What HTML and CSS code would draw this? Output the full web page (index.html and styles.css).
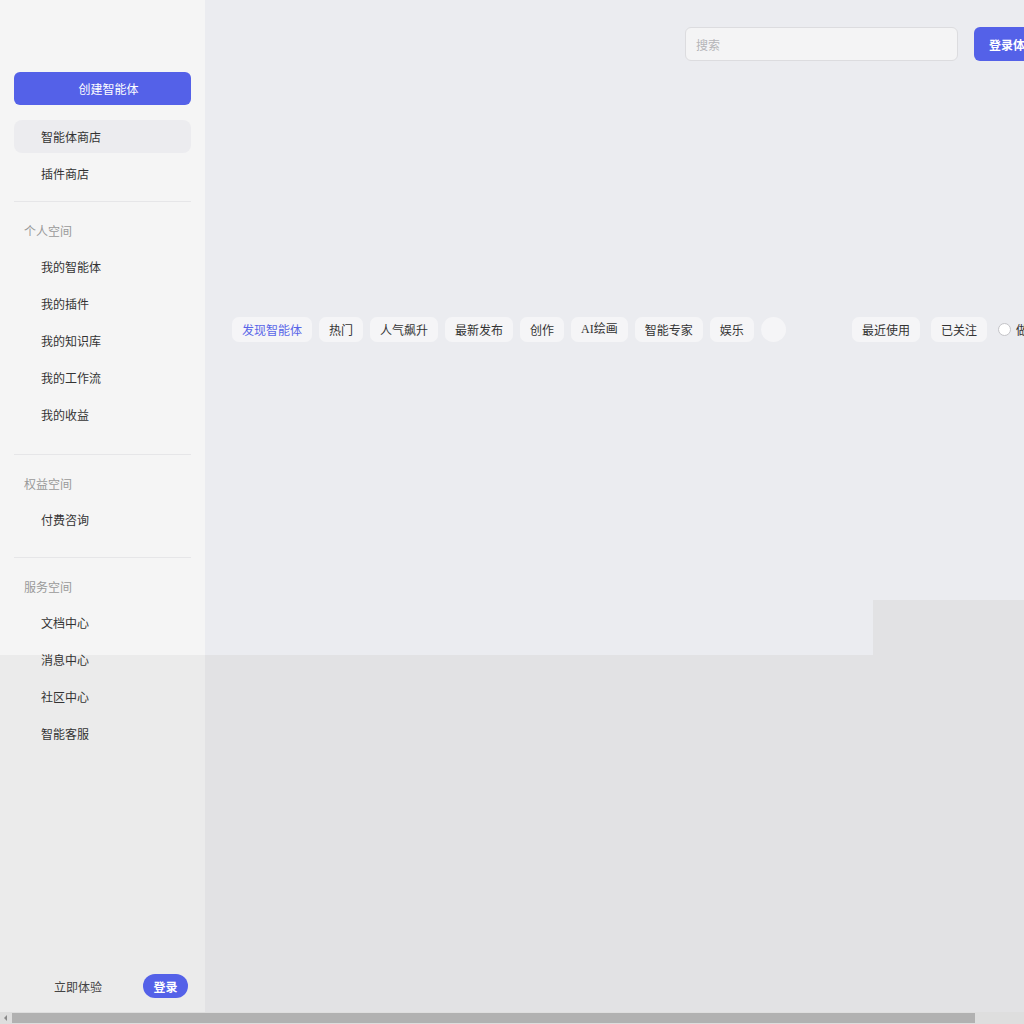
FILE: index.html
```html
<!DOCTYPE html>
<html lang="zh-CN">
<head>
    <meta charset="UTF-8">
    <meta name="viewport" content="width=device-width, initial-scale=1.0">
    <title>智能体商店</title>
    <link rel="stylesheet" href="styles.css">
</head>
<body>
<div class="app">

    <!-- 左侧导航 -->
    <aside class="sidebar">
        <button class="create-btn">创建智能体</button>

        <nav class="side-group first">
            <a class="side-item active" href="#">智能体商店</a>
            <a class="side-item" href="#">插件商店</a>
        </nav>

        <nav class="side-group personal">
            <div class="side-title">个人空间</div>
            <a class="side-item" href="#">我的智能体</a>
            <a class="side-item" href="#">我的插件</a>
            <a class="side-item" href="#">我的知识库</a>
            <a class="side-item" href="#">我的工作流</a>
            <a class="side-item" href="#">我的收益</a>
        </nav>

        <nav class="side-group">
            <div class="side-title">权益空间</div>
            <a class="side-item" href="#">付费咨询</a>
        </nav>

        <nav class="side-group last">
            <div class="side-title">服务空间</div>
            <a class="side-item" href="#">文档中心</a>
            <a class="side-item" href="#">消息中心</a>
            <a class="side-item" href="#">社区中心</a>
            <a class="side-item" href="#">智能客服</a>
        </nav>

        <div class="side-footer">
            <span class="try-link">立即体验</span>
            <button class="login-pill">登录</button>
        </div>
    </aside>

    <!-- 主内容 -->
    <main class="main">
        <div class="main-top">
            <header class="topbar">
                <input class="search" type="text" placeholder="搜索">
                <button class="login-btn">登录体验</button>
            </header>

            <div class="banner"></div>

            <!-- 分类标签 -->
            <div class="tabs-row">
                <div class="tabs">
                    <span class="tab current">发现智能体</span>
                    <span class="tab">热门</span>
                    <span class="tab">人气飙升</span>
                    <span class="tab">最新发布</span>
                    <span class="tab">创作</span>
                    <span class="tab ai">AI绘画</span>
                    <span class="tab">智能专家</span>
                    <span class="tab">娱乐</span>
                    <span class="tab more"></span>
                </div>
                <div class="tabs filters">
                    <span class="tab">最近使用</span>
                    <span class="tab">已关注</span>
                    <label class="check"><span class="radio"></span>做同款</label>
                </div>
            </div>

            <div class="feed">
                <div class="feed-card"></div>
            </div>
        </div>
    </main>

</div>

<!-- 横向滚动条 -->
<div class="hscroll">
    <span class="hscroll-arrow"></span>
    <span class="hscroll-thumb"></span>
</div>
</body>
</html>
```

FILE: styles.css
```css
/* Global */
html, body {
    height: 100%;
}

body {
    margin: 0;
    background-color: #e2e2e4;
    color: #333;
    font-family: "Noto Sans CJK SC", "Noto Sans", sans-serif;
    font-size: 12px;
    overflow: hidden;
}

a {
    color: inherit;
    text-decoration: none;
}

button {
    font-family: inherit;
    border: none;
    cursor: pointer;
}

.app {
    display: flex;
    width: 1070px;
    height: calc(100% - 12px);
}

/* Sidebar */
.sidebar {
    width: 205px;
    flex-shrink: 0;
    display: flex;
    flex-direction: column;
    padding: 72px 14px 14px;
    box-sizing: border-box;
    background: linear-gradient(#f5f5f5 0 655px, #ebebeb 655px);
}

.create-btn {
    height: 33px;
    border-radius: 6px;
    background-color: #5461e8;
    color: #fff;
    font-size: 12px;
    padding-left: 18px;
    margin-bottom: 15px;
}

.side-group {
    display: flex;
    flex-direction: column;
    gap: 4px;
    padding: 12px 0 21px;
    border-top: 1px solid #e6e6e8;
}

.side-group.first {
    border-top: none;
    padding: 0 0 11px;
}

.side-group.personal {
    padding-bottom: 23px;
}

.side-group.last {
    padding-bottom: 0;
}

.side-item,
.side-title {
    height: 33px;
    line-height: 33px;
    padding-left: 27px;
    border-radius: 8px;
}

.side-title {
    padding-left: 10px;
    color: #999;
    margin-bottom: -1px;
}

.side-item.active {
    background-color: #ececef;
}

.side-footer {
    margin-top: auto;
    display: flex;
    align-items: center;
    justify-content: space-between;
    padding: 0 3px 0 40px;
}

.try-link {
    color: #444;
}

.login-pill {
    height: 24px;
    width: 45px;
    border-radius: 12px;
    background-color: #5461e8;
    color: #fff;
    font-size: 12px;
    font-weight: bold;
    padding: 0;
}

/* Main area */
.main {
    flex: 1;
}

.main-top {
    height: 655px;
    background-color: #ebecf0;
    display: flex;
    flex-direction: column;
}

.topbar {
    display: flex;
    justify-content: flex-end;
    gap: 16px;
    padding: 27px 14px 0 0;
}

.search {
    width: 273px;
    height: 34px;
    box-sizing: border-box;
    border: 1px solid #dcdcdf;
    border-radius: 6px;
    background-color: #f4f4f5;
    padding: 0 10px;
    font-family: inherit;
    font-size: 12px;
    outline: none;
}

.search::placeholder {
    color: #b5b5b8;
}

.login-btn {
    width: 82px;
    height: 34px;
    border-radius: 6px;
    background-color: #5461e8;
    color: #fff;
    font-size: 12px;
    font-weight: bold;
    text-align: left;
    padding-left: 15px;
}

.banner {
    height: 256px;
}

/* Tabs */
.tabs-row {
    display: flex;
    justify-content: space-between;
    align-items: center;
    padding: 0 18px 0 27px;
}

.tabs {
    display: flex;
    align-items: center;
    gap: 7px;
}

.tabs.filters {
    gap: 11px;
}

.tab {
    height: 25px;
    line-height: 25px;
    padding: 0 10px;
    border-radius: 7px;
    background-color: #f5f5f7;
    color: #333;
}

.tab.current {
    color: #5865e8;
}

.tab.ai {
    font-family: "Liberation Serif", "Noto Sans CJK SC", serif;
}

.tab.more {
    width: 25px;
    padding: 0;
    border-radius: 50%;
}

.check {
    display: flex;
    align-items: center;
    gap: 5px;
}

.radio {
    width: 13px;
    height: 13px;
    box-sizing: border-box;
    border: 1px solid #c4c4c8;
    border-radius: 50%;
    background-color: #fff;
}

/* Feed */
.feed {
    margin-top: auto;
    display: flex;
    justify-content: flex-end;
}

.feed-card {
    width: 197px;
    height: 55px;
    background-color: #e2e2e4;
}

/* Horizontal scrollbar */
.hscroll {
    height: 12px;
    display: flex;
    align-items: center;
    padding: 0 49px 0 4px;
    background-color: #dedede;
}

.hscroll-arrow {
    width: 0;
    height: 0;
    border-top: 3px solid transparent;
    border-bottom: 3px solid transparent;
    border-right: 3px solid #8a8a8a;
}

.hscroll-thumb {
    flex: 1;
    height: 10px;
    margin-left: 5px;
    background-color: #b1b1b1;
}
```
